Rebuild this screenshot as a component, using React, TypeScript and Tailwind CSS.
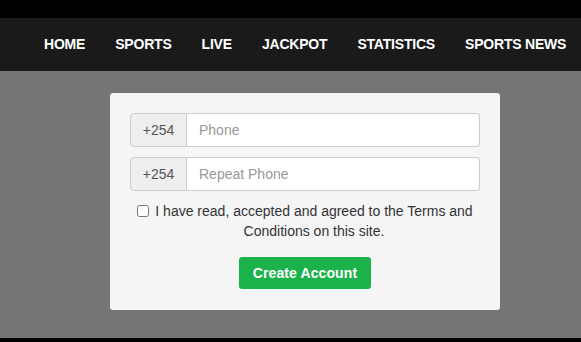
import React from "react";

const navItems = ["HOME", "SPORTS", "LIVE", "JACKPOT", "STATISTICS", "SPORTS NEWS"];

function PhoneField({ placeholder }: { placeholder: string }) {
  return (
    <div className="flex h-[34px] w-full">
      <span className="flex w-[57px] items-center justify-center rounded-l-[4px] border border-[#cccccc] bg-[#eeeeee] text-[14px] text-[#555555]">
        +254
      </span>
      <input
        type="text"
        placeholder={placeholder}
        className="min-w-0 flex-1 rounded-r-[4px] border border-l-0 border-[#cccccc] bg-white px-3 text-[14px] text-[#555555] outline-none placeholder:text-[#999999]"
      />
    </div>
  );
}

export default function App() {
  return (
    <div
      className="flex h-[342px] w-[581px] flex-col overflow-hidden bg-black"
      style={{ fontFamily: '"Liberation Sans", Arial, sans-serif' }}
    >
      <div className="h-[18px] shrink-0 bg-black" />
      <nav className="flex h-[53px] shrink-0 items-center bg-[#1a1a1b] pl-[29px]">
        {navItems.map((item) => (
          <a
            key={item}
            href="#"
            className="whitespace-nowrap px-[15px] text-[14px] font-bold tracking-[-0.2px] text-white"
          >
            {item}
          </a>
        ))}
      </nav>
      <main className="flex h-[267px] shrink-0 justify-center bg-[#757477] pt-[22px]">
        <form className="ml-[29px] flex h-[217px] w-[390px] flex-col items-center rounded-[3px] bg-[#f5f5f6] px-[20px] pt-[20px]">
          <PhoneField placeholder="Phone" />
          <div className="h-[10px]" />
          <PhoneField placeholder="Repeat Phone" />
          <label className="relative mt-[10px] block w-full pl-[18px] text-center text-[14px] leading-[20px] text-[#333333]">
            <input
              type="checkbox"
              className="absolute left-[7px] top-[4px] h-[12px] w-[12px]"
            />
            I have read, accepted and agreed to the Terms and Conditions on this site.
          </label>
          <button
            type="button"
            className="mt-[16px] h-[32px] w-[132px] rounded-[3px] bg-[#1cb24b] text-[14px] font-bold tracking-[0.1px] text-white"
          >
            Create Account
          </button>
        </form>
      </main>
      <div className="h-[4px] shrink-0 bg-black" />
    </div>
  );
}
